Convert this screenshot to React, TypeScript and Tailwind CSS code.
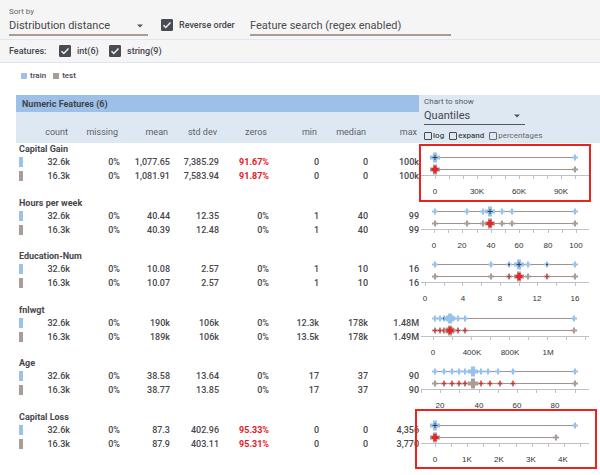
import React from "react";

type Mark = { x: number; tone?: "dark" | "red"; big?: boolean };

type Feature = {
  name: string;
  rows: string[][];
  alertZeros?: boolean;
  train: Mark[];
  test: Mark[];
  axis: { start: number; step: number; count: number };
  labels: { x: number; text: string }[];
  highlight?: "inner" | "outer";
};

const COLUMNS = [
  { title: "count", width: "w-[54px]" },
  { title: "missing", width: "w-[50px]" },
  { title: "mean", width: "w-[50px]" },
  { title: "std dev", width: "w-[49px]" },
  { title: "zeros", width: "w-[50px]" },
  { title: "min", width: "w-[50px]" },
  { title: "median", width: "w-[49px]" },
  { title: "max", width: "w-[51px]" },
];

const marks = (xs: number[], big: number, tones: Record<number, "dark" | "red"> = {}): Mark[] =>
  xs.map((x) => ({ x, big: x === big, tone: tones[x] }));

const allRed = (xs: number[], except: number[] = []) =>
  Object.fromEntries(xs.filter((x) => !except.includes(x)).map((x) => [x, "red" as const]));

const FNLWGT = [16, 21, 25, 28, 31, 34, 39, 46, 155];
const AGE_TEST = [16, 25, 33, 40, 46, 54, 62, 71, 81, 94, 156];

const FEATURES: Feature[] = [
  {
    name: "Capital Gain",
    rows: [
      ["32.6k", "0%", "1,077.65", "7,385.29", "91.67%", "0", "0", "100k"],
      ["16.3k", "0%", "1,081.91", "7,583.94", "91.87%", "0", "0", "100k"],
    ],
    alertZeros: true,
    train: marks([16, 156], 16, { 16: "dark" }),
    test: marks([16, 156], 16, { 16: "red" }),
    axis: { start: 16, step: 14, count: 11 },
    labels: [
      { x: 16, text: "0" },
      { x: 58, text: "30K" },
      { x: 100, text: "60K" },
      { x: 142, text: "90K" },
    ],
    highlight: "inner",
  },
  {
    name: "Hours per week",
    rows: [
      ["32.6k", "0%", "40.44", "12.35", "0%", "1", "40", "99"],
      ["16.3k", "0%", "40.39", "12.48", "0%", "1", "40", "99"],
    ],
    train: marks([16, 48, 64, 71, 83, 93, 156], 71, { 71: "dark" }),
    test: marks([16, 48, 64, 71, 83, 93, 156], 71, { 71: "red" }),
    axis: { start: 15, step: 14.2, count: 11 },
    labels: [
      { x: 15, text: "0" },
      { x: 43, text: "20" },
      { x: 72, text: "40" },
      { x: 100, text: "60" },
      { x: 129, text: "80" },
      { x: 157, text: "100" },
    ],
  },
  {
    name: "Education-Num",
    rows: [
      ["32.6k", "0%", "10.08", "2.57", "0%", "1", "10", "16"],
      ["16.3k", "0%", "10.07", "2.57", "0%", "1", "10", "16"],
    ],
    train: marks([16, 72, 90, 100, 109, 128, 156], 100, { 90: "dark", 100: "dark", 128: "dark" }),
    test: marks([16, 72, 90, 100, 109, 128, 156], 100, { 90: "red", 100: "red", 128: "red" }),
    axis: { start: 6, step: 18.7, count: 9 },
    labels: [
      { x: 6, text: "0" },
      { x: 44, text: "4" },
      { x: 81, text: "8" },
      { x: 118, text: "12" },
      { x: 156, text: "16" },
    ],
  },
  {
    name: "fnlwgt",
    rows: [
      ["32.6k", "0%", "190k", "106k", "0%", "12.3k", "178k", "1.48M"],
      ["16.3k", "0%", "189k", "106k", "0%", "13.5k", "178k", "1.49M"],
    ],
    train: marks(FNLWGT, 31, { 25: "dark", 28: "dark", 34: "dark" }),
    test: marks(FNLWGT, 31, allRed(FNLWGT, [155])),
    axis: { start: 14, step: 19, count: 9 },
    labels: [
      { x: 14, text: "0" },
      { x: 53, text: "400K" },
      { x: 91, text: "800K" },
      { x: 129, text: "1M" },
    ],
  },
  {
    name: "Age",
    rows: [
      ["32.6k", "0%", "38.58", "13.64", "0%", "17", "37", "90"],
      ["16.3k", "0%", "38.77", "13.85", "0%", "17", "37", "90"],
    ],
    train: marks([16, 25, 33, 40, 46, 54, 62, 69, 79, 94, 156], 54),
    test: marks(AGE_TEST, 54, allRed(AGE_TEST, [54, 16, 156])),
    axis: { start: 2, step: 19.2, count: 9 },
    labels: [
      { x: 21, text: "20" },
      { x: 60, text: "40" },
      { x: 98, text: "60" },
      { x: 136, text: "80" },
    ],
  },
  {
    name: "Capital Loss",
    rows: [
      ["32.6k", "0%", "87.3", "402.96", "95.33%", "0", "0", "4,356"],
      ["16.3k", "0%", "87.9", "403.11", "95.31%", "0", "0", "3,770"],
    ],
    alertZeros: true,
    train: marks([16, 156], 16, { 16: "dark" }),
    test: marks([16, 137], 16, { 16: "red" }),
    axis: { start: 16, step: 16.1, count: 10 },
    labels: [
      { x: 16, text: "0" },
      { x: 48, text: "1K" },
      { x: 80, text: "2K" },
      { x: 112, text: "3K" },
      { x: 144, text: "4K" },
    ],
    highlight: "outer",
  },
];

function Plus({ x, y, r, w, color }: { x: number; y: number; r: number; w: number; color: string }) {
  return <path d={`M${x - r} ${y}H${x + r}M${x} ${y - r}V${y + r}`} stroke={color} strokeWidth={w} />;
}

function Series({ points, y, color }: { points: Mark[]; y: number; color: string }) {
  const ordered = [...points].sort((a, b) => Number(!!a.big) - Number(!!b.big));
  return (
    <g>
      <path d={`M${points[0].x} ${y}H${points[points.length - 1].x}`} stroke="#a0938f" strokeWidth={1} />
      {ordered.map((p) => (
        <g key={p.x}>
          <Plus x={p.x} y={y} r={p.big ? 5 : 3} w={p.big ? 4 : 2} color={color} />
          {p.tone === "dark" && <Plus x={p.x} y={y} r={p.big ? 2.5 : 1} w={1} color="#2f4057" />}
          {p.tone === "red" && <Plus x={p.x} y={y} r={p.big ? 3.5 : 2} w={p.big ? 3 : 1} color="#ee2222" />}
        </g>
      ))}
    </g>
  );
}

function QuantileChart({ feature }: { feature: Feature }) {
  const { start, step, count } = feature.axis;
  const ticks = Array.from({ length: count }, (_, i) => Math.round(start + i * step) + 0.5);
  return (
    <svg width="181" height="53" className="block overflow-visible" role="img" aria-label={`${feature.name} quantiles`}>
      <path d="M2 32.5H170" stroke="#bfc1c6" />
      {ticks.map((x) => (
        <path key={x} d={`M${x} 33V36`} stroke="#bfc1c6" />
      ))}
      <Series points={feature.train} y={14.5} color="#99c1ec" />
      <Series points={feature.test} y={26.5} color="#ab9c97" />
      {feature.labels.map((l) => (
        <text
          key={l.text}
          x={l.x}
          y={51}
          textAnchor="middle"
          className="fill-[#333333] font-['Liberation_Sans',Arial,sans-serif] text-[8px]"
        >
          {l.text}
        </text>
      ))}
    </svg>
  );
}

function Caret() {
  return (
    <svg width="6" height="4" viewBox="0 0 6 4" className="pointer-events-none col-start-1 row-start-1 mr-[5px] self-center justify-self-end">
      <path d="M0 0.5H6L3 3.5Z" fill="#555555" />
    </svg>
  );
}

function CheckedBox({ label, className = "" }: { label: string; className?: string }) {
  return (
    <label className={`flex items-center gap-[6px] ${className}`}>
      <span className="grid">
        <input
          type="checkbox"
          defaultChecked
          className="peer col-start-1 row-start-1 size-3 appearance-none rounded-[1px] border border-[#4b4c52] checked:bg-[#4b4c52]"
        />
        <svg
          width="12"
          height="12"
          viewBox="0 0 12 12"
          className="pointer-events-none invisible col-start-1 row-start-1 peer-checked:visible"
        >
          <path d="M2.5 6.2L4.8 8.5L9.5 3.6" fill="none" stroke="#e9f2fc" strokeWidth="1.5" />
        </svg>
      </span>
      <span className="whitespace-nowrap">{label}</span>
    </label>
  );
}

function SmallBox({ label, className }: { label: string; className: string }) {
  return (
    <label className={`flex items-center gap-px ${className}`}>
      <input type="checkbox" className="size-2 appearance-none rounded-[1px] border border-current checked:bg-current" />
      {label}
    </label>
  );
}

export default function App() {
  return (
    <main className="min-h-screen bg-white pb-3 font-[Roboto,sans-serif] text-[9px] leading-[14px] font-medium text-[#47474c]">
      <header className="bg-[#f5f5f5]">
        <div className="flex h-10 items-end border-b border-[#dde6f1] pb-[3px] pl-[9px]">
          <div className="w-[139px]">
            <label htmlFor="sort" className="block text-[8px] leading-[10px] font-normal text-[#66666a]">
              Sort by
            </label>
            <div className="grid border-b-2 border-[#ab9c93]">
              <select
                id="sort"
                className="col-start-1 row-start-1 h-[17px] appearance-none text-[11px] leading-[17px] font-normal outline-none"
              >
                <option>Distribution distance</option>
              </select>
              <Caret />
            </div>
          </div>
          <CheckedBox label="Reverse order" className="mb-[4px] ml-[13px] w-[76px]" />
          <input
            type="text"
            aria-label="Feature search"
            placeholder="Feature search (regex enabled)"
            className="ml-[13px] h-[19px] w-[201px] border-b-2 border-[#ab9c93] text-[11px] font-normal outline-none placeholder:text-[#4c4c51]"
          />
        </div>
        <fieldset className="flex h-[23px] items-center border-b border-[#dde6f1] pl-[9px]">
          <span className="w-[50px]">Features:</span>
          <CheckedBox label="int(6)" className="w-[50px]" />
          <CheckedBox label="string(9)" />
        </fieldset>
      </header>

      <div className="flex h-8 items-center gap-[7px] pb-[6px] pl-[21px] text-[8px]">
        <span className="flex items-center gap-[3px]">
          <i className="size-[6px] bg-[#9cc2ec]" />
          train
        </span>
        <span className="flex items-center gap-[3px]">
          <i className="size-[6px] bg-[#ab9c97]" />
          test
        </span>
      </div>

      <div className="pl-4">
        <table className="w-full table-fixed border-collapse text-right">
          <colgroup>
            {COLUMNS.map((c) => (
              <col key={c.title} className={c.width} />
            ))}
            <col />
          </colgroup>
          <thead>
            <tr className="h-[17px]">
              <th colSpan={8} className="bg-[#9cc0e8] p-0 pl-[6px] text-left font-bold text-[#44444a]">
                Numeric Features (6)
              </th>
              <th rowSpan={2} className="bg-[#dee8f3] p-0 pl-[5px] text-left align-top font-normal">
                <label htmlFor="chart" className="block pt-[2px] text-[8px] leading-[10px] text-[#5a5a5f]">
                  Chart to show
                </label>
                <div className="grid w-[101px] border-b border-[#55565c]">
                  <select
                    id="chart"
                    className="col-start-1 row-start-1 h-[17px] appearance-none text-[11px] leading-[17px] outline-none"
                  >
                    <option>Quantiles</option>
                  </select>
                  <Caret />
                </div>
                <div className="flex h-[18px] items-center gap-[5px] pt-[3px] text-[8px] leading-[10px]">
                  <SmallBox label="log" className="font-medium" />
                  <SmallBox label="expand" className="font-medium" />
                  <SmallBox label="percentages" className="text-[#68686e]" />
                </div>
              </th>
            </tr>
            <tr className="h-[31px] bg-[#dee8f3]">
              {COLUMNS.map((c) => (
                <th key={c.title} className="p-0 pt-[8px] pr-[2px] font-normal whitespace-nowrap text-[#5f5f65]">
                  {c.title}
                </th>
              ))}
            </tr>
          </thead>
          {FEATURES.map((f, i) => (
            <tbody key={f.name}>
              <tr className="h-[12px]">
                <th colSpan={8} className="p-0 pl-[3px] text-left leading-[12px] font-bold">
                  {f.name}
                </th>
                <td rowSpan={4} className="relative p-0 align-top">
                  <QuantileChart feature={f} />
                  {f.highlight === "inner" && (
                    <div className="absolute top-px left-0 z-10 h-[58px] w-[172px] border-2 border-[#ea2320]" />
                  )}
                  {f.highlight === "outer" && (
                    <div className="absolute -top-[2px] -left-[4px] z-10 h-[60px] w-[182px] border-2 border-[#ea2320]" />
                  )}
                </td>
              </tr>
              {f.rows.map((row, r) => (
                <tr key={r} className="h-[14px]">
                  {row.map((value, c) => (
                    <td key={c} className={c === 4 && f.alertZeros ? "p-0 font-bold text-[#e8171c]" : "p-0"}>
                      {c === 0 ? (
                        <span className="flex items-center justify-between pl-[3px]">
                          <i className={r === 0 ? "h-[10px] w-1 bg-[#9cc2ec]" : "h-[10px] w-1 bg-[#ab9c97]"} />
                          {value}
                        </span>
                      ) : (
                        value
                      )}
                    </td>
                  ))}
                </tr>
              ))}
              <tr className={i % 2 === 0 ? "h-[14px]" : "h-[13px]"}>
                <td colSpan={8} className="p-0" />
              </tr>
            </tbody>
          ))}
        </table>
      </div>
    </main>
  );
}
